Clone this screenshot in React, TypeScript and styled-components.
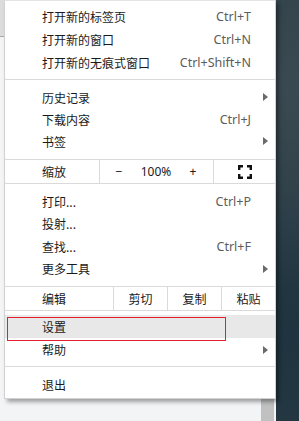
import React from "react";
import styled, { createGlobalStyle } from "styled-components";

const GlobalStyle = createGlobalStyle`
  html, body {
    margin: 0;
    padding: 0;
  }
  body {
    width: 299px;
    height: 421px;
    overflow: hidden;
    background: #f1f3f4;
    font-family: "Noto Sans", "Noto Sans CJK SC", sans-serif;
  }
`;

const Page = styled.div`
  display: flex;
  width: 299px;
  height: 421px;
`;

const Browser = styled.div`
  position: relative;
  width: 276px;
  display: flex;
  flex-direction: column;
  background: #f3f4f6;
`;

const TabStrip = styled.div`
  height: 36px;
  background: #dcdcdc;
  border-bottom: 1px solid #a8a8a8;
`;

const Content = styled.div`
  flex: 1;
  display: flex;
  justify-content: flex-end;
  padding-right: 2px;
`;

const Scrollbar = styled.div`
  width: 13px;
  background: #c1c1c1;
`;

const Desktop = styled.div`
  flex: 1;
  background: radial-gradient(circle at 30% 20%, #3a4a52 0%, transparent 60%),
    radial-gradient(circle at 70% 80%, #1f3440 0%, transparent 70%), #2c3d45;
`;

const Menu = styled.div`
  position: absolute;
  left: 4px;
  top: 0;
  width: 272px;
  box-sizing: border-box;
  background: #fff;
  border: 1px solid #d2d2d2;
  border-top-color: #e4e4e4;
  box-shadow: 3px 3px 4px rgba(0, 0, 0, 0.35);
  color: #1a1a1a;
  font-size: 12px;
`;

const Section = styled.div<{ $top: number; $bottom: number }>`
  padding-top: ${(p) => p.$top}px;
  padding-bottom: ${(p) => p.$bottom}px;
`;

const Separator = styled.div`
  height: 1px;
  background: #dadada;
`;

const Item = styled.div<{ $h?: number; $active?: boolean }>`
  position: relative;
  display: grid;
  grid-template-columns: 1fr auto 24px;
  align-items: center;
  height: ${(p) => p.$h ?? 23}px;
  padding-left: 37px;
  background: ${(p) => (p.$active ? "#e8e8e8" : "transparent")};
  font-family: "Noto Sans CJK SC", sans-serif;
`;

const Shortcut = styled.span`
  font-family: "Noto Sans", "Noto Sans CJK SC", sans-serif;
  font-size: 12.5px;
  color: #5c5c5c;
`;

const Trailing = styled.span`
  display: flex;
  align-items: center;
  padding-left: 12px;
`;

const Arrow = styled.span`
  width: 0;
  height: 0;
  border-left: 5px solid #6a6a6a;
  border-top: 4px solid transparent;
  border-bottom: 4px solid transparent;
`;

const Annotation = styled.div`
  position: absolute;
  left: 2px;
  top: 2px;
  width: 219px;
  height: 24px;
  box-sizing: border-box;
  border: 1px solid #e3202b;
  pointer-events: none;
`;

const CellRow = styled.div`
  display: flex;
  height: 23px;
  font-family: "Noto Sans CJK SC", sans-serif;
`;

const Cell = styled.div<{ $w?: number; $pad?: number; $center?: boolean }>`
  display: flex;
  align-items: center;
  justify-content: ${(p) => (p.$center ? "center" : "flex-start")};
  box-sizing: border-box;
  width: ${(p) => (p.$w ? `${p.$w}px` : "auto")};
  flex: ${(p) => (p.$w ? "none" : "1")};
  padding-left: ${(p) => p.$pad ?? 0}px;
  border-right: ${(p) => (p.$w ? "1px solid #dadada" : "none")};
`;

const ZoomControls = styled.div`
  display: grid;
  grid-template-columns: 38px 36px 38px;
  align-items: center;
  box-sizing: border-box;
  width: 114px;
  border-right: 1px solid #dadada;
  font-family: "Noto Sans", sans-serif;
  font-size: 12px;
  text-align: center;
`;

const FullscreenIcon = () => (
  <svg width="14" height="14" viewBox="0 0 14 14" fill="none" stroke="#111" strokeWidth="2.4">
    <path d="M1.2 5V1.2H5" />
    <path d="M9 1.2h3.8V5" />
    <path d="M12.8 9v3.8H9" />
    <path d="M5 12.8H1.2V9" />
  </svg>
);

type Entry = { label: string; shortcut?: string; sub?: boolean };

const MenuItem = ({ label, shortcut, sub, h }: Entry & { h?: number }) => (
  <Item $h={h}>
    <span>{label}</span>
    <Shortcut>{shortcut}</Shortcut>
    <Trailing>{sub && <Arrow />}</Trailing>
  </Item>
);

const first: Entry[] = [
  { label: "打开新的标签页", shortcut: "Ctrl+T" },
  { label: "打开新的窗口", shortcut: "Ctrl+N" },
  { label: "打开新的无痕式窗口", shortcut: "Ctrl+Shift+N" },
];

const second: Entry[] = [
  { label: "历史记录", sub: true },
  { label: "下载内容", shortcut: "Ctrl+J" },
  { label: "书签", sub: true },
];

const third: Entry[] = [
  { label: "打印...", shortcut: "Ctrl+P" },
  { label: "投射..." },
  { label: "查找...", shortcut: "Ctrl+F" },
  { label: "更多工具", sub: true },
];

export default function App() {
  return (
    <>
      <GlobalStyle />
      <Page>
        <Browser>
          <TabStrip />
          <Content>
            <Scrollbar />
          </Content>
          <Menu>
            <Section $top={4} $bottom={5}>
              {first.map((e) => (
                <MenuItem key={e.label} {...e} />
              ))}
            </Section>
            <Separator />
            <Section $top={6} $bottom={7}>
              {second.map((e) => (
                <MenuItem key={e.label} {...e} h={22} />
              ))}
            </Section>
            <Separator />
            <CellRow>
              <Cell $w={95} $pad={37}>缩放</Cell>
              <ZoomControls>
                <span>−</span>
                <span>100%</span>
                <span>+</span>
              </ZoomControls>
              <Cell $center>
                <FullscreenIcon />
              </Cell>
            </CellRow>
            <Separator />
            <Section $top={6} $bottom={6}>
              {third.map((e) => (
                <MenuItem key={e.label} {...e} h={22.5} />
              ))}
            </Section>
            <Separator />
            <CellRow>
              <Cell $w={109} $pad={37}>编辑</Cell>
              <Cell $w={54} $center>剪切</Cell>
              <Cell $w={54} $center>复制</Cell>
              <Cell $center>粘贴</Cell>
            </CellRow>
            <Separator />
            <Section $top={4} $bottom={5}>
              <Item $active>
                <span>设置</span>
                <span />
                <span />
                <Annotation />
              </Item>
              <MenuItem label="帮助" sub />
            </Section>
            <Separator />
            <Section $top={6} $bottom={2}>
              <MenuItem label="退出" />
            </Section>
          </Menu>
        </Browser>
        <Desktop />
      </Page>
    </>
  );
}
